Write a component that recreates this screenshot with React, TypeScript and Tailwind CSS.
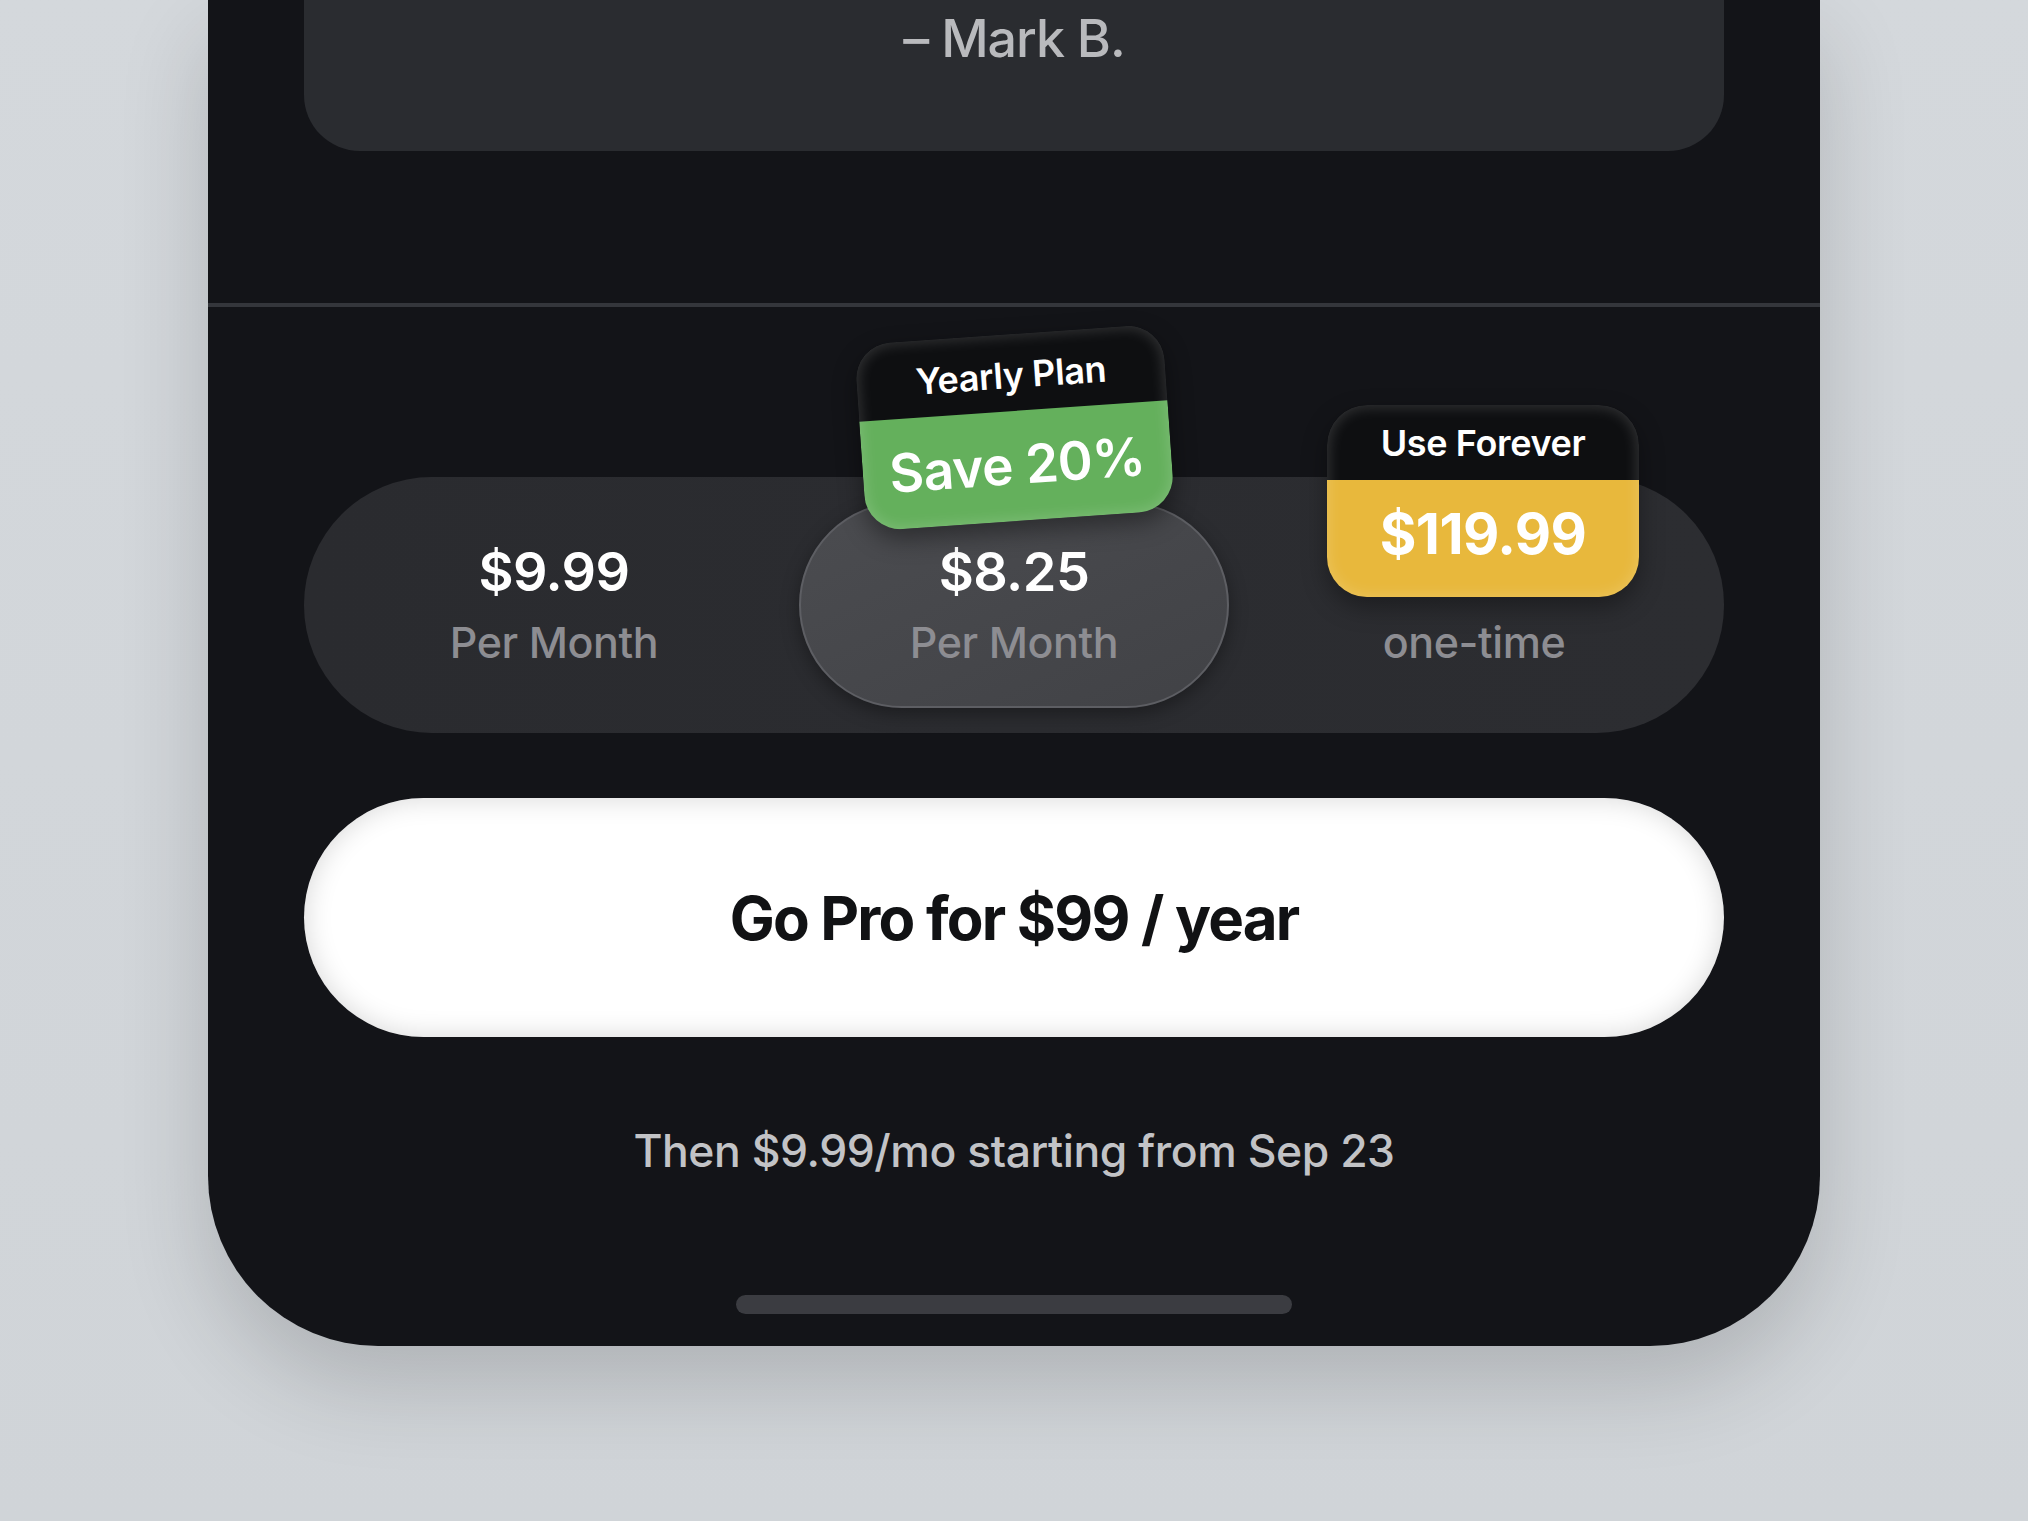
import { FC } from "react";

type PlanProps = {
  price?: string;
  label: string;
  selected?: boolean;
};

const PlanColumn: FC<PlanProps> = (props) => (
  <div
    className={
      props.selected
        ? "mx-[15px] flex flex-col items-center justify-center rounded-full border-2 border-[#5d5e63] bg-gradient-to-br from-[#4b4c50] to-[#414246] shadow-[0_6px_18px_rgba(0,0,0,0.35)]"
        : "flex flex-col items-center justify-center"
    }
  >
    {props.price ? (
      <p className="text-[54px] font-semibold leading-[60px] tracking-[-0.01em] text-white">
        {props.price}
      </p>
    ) : (
      <div className="h-[60px]" />
    )}
    <p className="mt-[14px] text-[43px] font-medium leading-[52px] tracking-[-0.01em] text-[#8d8d92]">
      {props.label}
    </p>
  </div>
);

const YearlyBadge: FC = () => (
  <div className="absolute left-[556px] top-[-143px] h-[187px] w-[309px] rotate-[-4deg] overflow-hidden rounded-[36px] shadow-[0_10px_24px_rgba(0,0,0,0.4)]">
    <div className="flex h-[77px] items-center justify-center bg-[#0e0f11] pt-[4px]">
      <span className="text-[36px] font-semibold tracking-[-0.01em] text-white">
        Yearly Plan
      </span>
    </div>
    <div className="flex h-[110px] items-center justify-center bg-[#64b05c]">
      <span className="text-[53px] font-semibold tracking-[-0.01em] text-white">
        Save 20%
      </span>
    </div>
    {/* glassy rim */}
    <div className="pointer-events-none absolute inset-0 rounded-[36px] shadow-[inset_0_0_16px_rgba(255,255,255,0.2)]" />
  </div>
);

const ForeverBadge: FC = () => (
  <div className="absolute left-[1023px] top-[-72px] h-[192px] w-[312px] overflow-hidden rounded-[40px] shadow-[0_10px_24px_rgba(0,0,0,0.35)]">
    <div className="flex h-[75px] items-center justify-center bg-[#0e0f11]">
      <span className="text-[36px] font-semibold tracking-[-0.01em] text-white">
        Use Forever
      </span>
    </div>
    <div className="flex h-[117px] items-center justify-center bg-[#e8b83c] pb-[10px]">
      <span className="text-[56px] font-bold tracking-[-0.01em] text-white">
        $119.99
      </span>
    </div>
    <div className="pointer-events-none absolute inset-0 rounded-[40px] shadow-[inset_0_0_16px_rgba(255,255,255,0.2)]" />
  </div>
);

export default function App() {
  return (
    <div className="flex h-[1521px] w-full justify-center overflow-hidden bg-gradient-to-b from-[#d4d8dc] to-[#d0d4d8] font-[Inter,'Noto_Sans',sans-serif]">
      <div className="flex h-[1346px] w-[1612px] flex-col rounded-b-[170px] bg-[#131418] shadow-[0_40px_90px_rgba(0,0,0,0.16)]">
        {/* Review card */}
        <div className="px-[96px]">
          <div className="flex h-[151px] justify-center rounded-b-[56px] bg-[#2a2c30]">
            <p className="mt-[8px] text-[52px] font-medium leading-[62px] tracking-[-0.02em] text-[#b9babd]">
              – Mark B.
            </p>
          </div>
        </div>

        <div className="mt-[152px] h-[4px] bg-[#34363b]" />

        {/* Plan switcher */}
        <div className="mt-[170px] px-[96px]">
          <div className="relative grid h-[256px] grid-cols-3 rounded-full bg-gradient-to-r from-[#2a2b2f] to-[#2c2d31] px-[20px] py-[25px]">
            <PlanColumn price="$9.99" label="Per Month" />
            <PlanColumn price="$8.25" label="Per Month" selected />
            <PlanColumn label="one-time" />
            <YearlyBadge />
            <ForeverBadge />
          </div>
        </div>

        {/* CTA */}
        <div className="mt-[65px] px-[96px]">
          <button className="flex h-[239px] w-full items-center justify-center rounded-full bg-white shadow-[inset_0_0_28px_rgba(0,0,0,0.16)]">
            <span className="text-[60px] font-bold tracking-[-0.03em] text-[#111214]">
              Go Pro for $99 / year
            </span>
          </button>
        </div>

        <p className="mt-[86px] text-center text-[44.5px] font-medium leading-[56px] tracking-[-0.01em] text-[#c2c3c6]">
          Then $9.99/mo starting from Sep 23
        </p>

        <div className="mx-auto mt-[116px] h-[19px] w-[556px] rounded-full bg-[#3b3c41]" />
      </div>
    </div>
  );
}
